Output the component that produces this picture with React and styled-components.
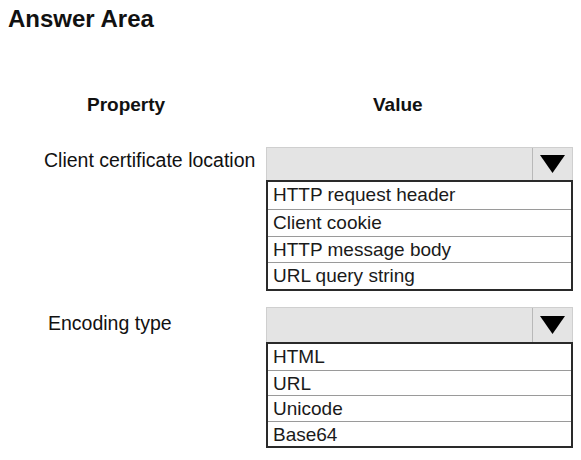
import styled, { createGlobalStyle } from "styled-components"

const Global = createGlobalStyle`
    body {
        margin: 0;
        background: #ffffff;
        font-family: "Liberation Sans", Arial, sans-serif;
        color: #111111;
    }
`

const Page = styled.div`
    width: 581px;
    height: 460px;
    padding: 5px 0 0 8px;
    box-sizing: border-box;
`

const Title = styled.h1`
    margin: 0;
    font-size: 24px;
    line-height: 28px;
    font-weight: bold;
`

const Table = styled.div`
    display: grid;
    grid-template-columns: 258px 307px;
    margin-top: 61px;
`

const Heading = styled.div`
    font-size: 19px;
    font-weight: bold;
    line-height: 22px;
    padding-left: ${p => p.indent}px;
    margin-bottom: 31px;
`

const Label = styled.div`
    font-size: 19.5px;
    line-height: 22px;
    padding-left: ${p => p.indent}px;
    padding-top: ${p => p.top}px;
`

const Dropdown = styled.div`
    display: flex;
    flex-direction: column;
    margin-bottom: 16px;
`

const Select = styled.div`
    display: flex;
    height: ${p => p.h}px;
    background: #e4e4e4;
    border: 1px solid #cfcfcf;
    border-bottom: none;
    box-sizing: border-box;
`

const SelectBox = styled.div`
    flex: 1;
    border-right: 1px solid #b8b8b8;
`

const Arrow = styled.div`
    width: 39px;
    display: flex;
    align-items: center;
    justify-content: center;
`

const Options = styled.ul`
    list-style: none;
    margin: 0;
    padding: 0;
    border: 2px solid #2a2a2a;
`

const Option = styled.li`
    height: ${p => p.h}px;
    font-size: 19px;
    line-height: ${p => p.h}px;
    padding-left: 5px;
    border-top: ${p => (p.first ? "none" : "1px solid #9a9a9a")};
    box-sizing: border-box;
    color: #1a1a1a;
`

const Triangle = () => (
    <svg width="25" height="18" viewBox="0 0 25 18">
        <polygon points="0,0 25,0 12.5,18" fill="#000" />
    </svg>
)

const rows = [
    {
        label: "Client certificate location",
        indent: 36,
        top: 2,
        head: 33,
        itemH: 26.75,
        items: ["HTTP request header", "Client cookie", "HTTP message body", "URL query string"],
    },
    {
        label: "Encoding type",
        indent: 40,
        top: 5,
        head: 35,
        itemH: 25.5,
        items: ["HTML", "URL", "Unicode", "Base64"],
    },
]

export default function App() {
    return (
        <>
            <Global />
            <Page>
                <Title>Answer Area</Title>
                <Table>
                    <Heading indent={79}>Property</Heading>
                    <Heading indent={107}>Value</Heading>
                    {rows.map(r => (
                        <>
                            <Label key={r.label} indent={r.indent} top={r.top}>{r.label}</Label>
                            <Dropdown key={r.label + "-dd"}>
                                <Select h={r.head}>
                                    <SelectBox />
                                    <Arrow><Triangle /></Arrow>
                                </Select>
                                <Options>
                                    {r.items.map((it, i) => (
                                        <Option key={it} h={r.itemH} first={i === 0}>{it}</Option>
                                    ))}
                                </Options>
                            </Dropdown>
                        </>
                    ))}
                </Table>
            </Page>
        </>
    )
}
